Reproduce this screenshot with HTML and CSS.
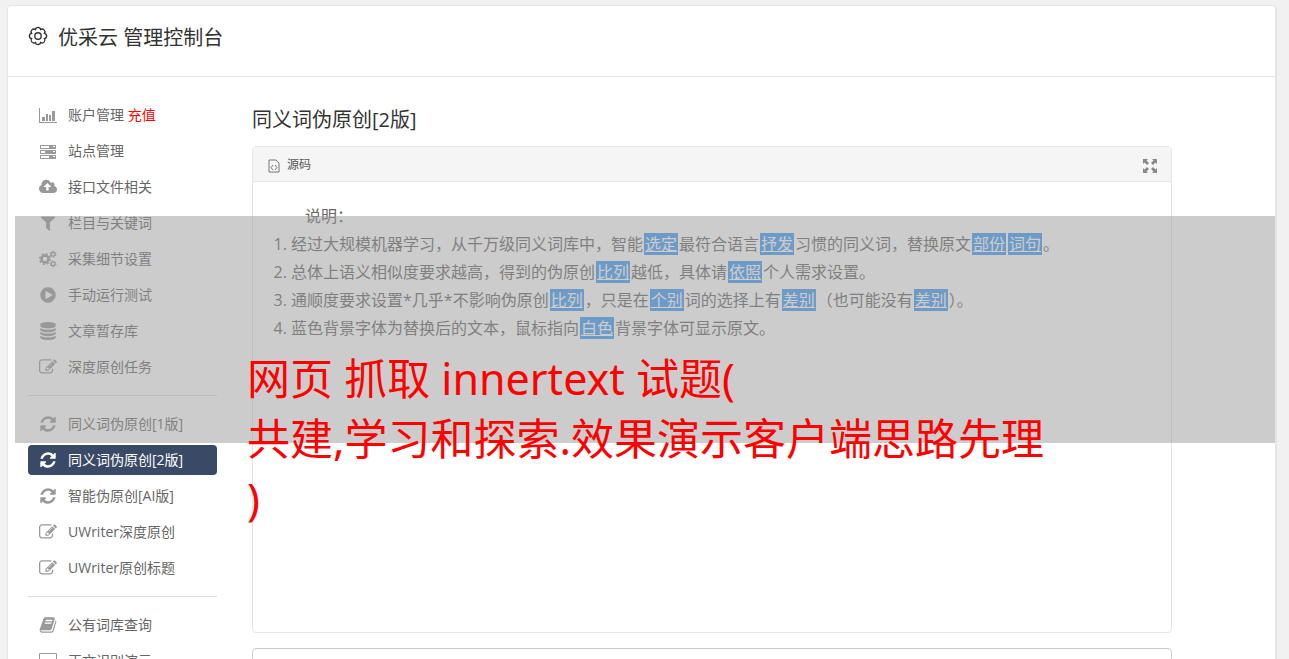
FILE: index.html
```html
<!DOCTYPE html>
<html lang="zh-CN">
<head>
    <meta charset="UTF-8">
    <meta name="viewport" content="width=device-width, initial-scale=1.0">
    <title>优采云 管理控制台</title>
    <link rel="stylesheet" href="styles.css">
</head>
<body>
    <!-- 公用图标 -->
    <svg class="symbols" aria-hidden="true">
        <symbol id="edit" viewBox="0 0 1792 1792"><path d="M888 1184l116-116-152-152-116 116v56h96v96h56zm440-720q-16-16-33 1l-350 350q-17 17-1 33t33-1l350-350q17-17 1-33zm80 594v190q0 119-84.5 203.5t-203.5 84.5h-832q-119 0-203.5-84.5t-84.5-203.5v-832q0-119 84.5-203.5t203.5-84.5h832q63 0 117 25 15 7 18 23 3 17-9 29l-49 49q-14 14-32 8-23-6-45-6h-832q-66 0-113 47t-47 113v832q0 66 47 113t113 47h832q66 0 113-47t47-113v-126q0-13 9-22l64-64q15-15 35-7t20 29zm-96-738l288 288-672 672h-288v-288zm444 132l-92 92-288-288 92-92q28-28 68-28t68 28l152 152q28 28 28 68t-28 68z"/></symbol>
        <symbol id="refresh" viewBox="0 0 1792 1792"><path d="M1639 1056q0 5-1 7-64 268-268 434.5t-478 166.5q-146 0-282.5-55t-243.5-157l-129 129q-19 19-45 19t-45-19-19-45v-448q0-26 19-45t45-19h448q26 0 45 19t19 45-19 45l-137 137q71 66 161 102t187 36q134 0 250-65t186-179q11-17 53-117 8-23 30-23h192q13 0 22.5 9.5t9.5 22.5zm25-800v448q0 26-19 45t-45 19h-448q-26 0-45-19t-19-45 19-45l138-138q-148-137-349-137-134 0-250 65t-186 179q-11 17-53 117-8 23-30 23h-199q-13 0-22.5-9.5t-9.5-22.5v-7q65-268 270-434.5t480-166.5q146 0 284 55.5t245 156.5l130-129q19-19 45-19t45 19 19 45z"/></symbol>
    </svg>

    <div class="card">
        <header class="card-header">
            <svg class="gear" viewBox="0 0 18 18"><path d="M14.8 6.6A2.45 2.45 0 0 1 14.8 11.4A2.45 2.45 0 0 1 11.4 14.8A2.45 2.45 0 0 1 6.6 14.8A2.45 2.45 0 0 1 3.2 11.4A2.45 2.45 0 0 1 3.2 6.6A2.45 2.45 0 0 1 6.6 3.2A2.45 2.45 0 0 1 11.4 3.2A2.45 2.45 0 0 1 14.8 6.6z"/><circle cx="9" cy="9" r="2.9"/></svg>
            <h1>优采云 管理控制台</h1>
        </header>

        <div class="card-body">
            <nav class="sidebar">
                <a href="#"><svg viewBox="0 0 18 18"><path d="M0 2h1v14h17v1H0zM3 11h3v4H3zM7 8h2v7H7zM10 9h2v6h-2zM13 5h3v10h-3z"/></svg>账户管理 <span class="recharge">充值</span></a>
                <a href="#"><svg viewBox="0 0 18 18"><path fill-rule="evenodd" d="M1 3h16v4H1zM2 4v2h8V4zM14 4v1h2V4zM1 8h16v4H1zM2 9v2h4V9zM14 9v1h2V9zM1 13h16v4H1zM2 14v2h8v-2zM14 14v1h2v-1z"/></svg>站点管理</a>
                <a href="#"><svg viewBox="-64 0 1920 1792"><path d="M1216 864q0-14-9-23l-352-352q-9-9-23-9t-23 9l-351 351q-10 12-10 24 0 14 9 23t23 9h224v352q0 13 9.5 22.5t22.5 9.5h192q13 0 22.5-9.5t9.5-22.5v-352h224q13 0 22.5-9.5t9.5-22.5zm640 288q0 159-112.5 271.5t-271.5 112.5h-1088q-185 0-316.5-131.5t-131.5-316.5q0-130 70-240t188-165q-2-30-2-43 0-212 150-362t362-150q156 0 285.5 87t188.5 231q71-62 166-62 106 0 181 75t75 181q0 76-41 138 130 31 213.5 135.5t83.5 238.5z"/></svg>接口文件相关</a>
                <a href="#"><svg viewBox="0 0 1792 1792"><path d="M1595 295q17 41-14 70l-493 493v742q0 42-39 59-13 5-25 5-27 0-45-19l-256-256q-19-19-19-45v-486l-493-493q-31-29-14-70 17-39 59-39h1280q42 0 59 39z"/></svg>栏目与关键词</a>
                <a href="#"><svg class="cogs" viewBox="0 0 18 18"><circle cx="6" cy="9" r="3.5" stroke-width="2.4"/><circle cx="6" cy="9" r="5.2" stroke-width="1.6" stroke-dasharray="2.04 2.04"/><circle cx="14" cy="4.2" r="1.9" stroke-width="1.4"/><circle cx="14" cy="4.2" r="3" stroke-width="1" stroke-dasharray="1.57 1.57"/><circle cx="14" cy="13.8" r="1.9" stroke-width="1.4"/><circle cx="14" cy="13.8" r="3" stroke-width="1" stroke-dasharray="1.57 1.57"/></svg>采集细节设置</a>
                <a href="#"><svg viewBox="0 0 1792 1792"><path d="M896 128q209 0 385.5 103t279.5 279.5 103 385.5-103 385.5-279.5 279.5-385.5 103-385.5-103-279.5-279.5-103-385.5 103-385.5 279.5-279.5 385.5-103zm384 823q32-18 32-55t-32-55l-544-320q-31-19-64-1-32 19-32 56v640q0 37 32 56 16 8 32 8 17 0 32-9z"/></svg>手动运行测试</a>
                <a href="#"><svg viewBox="0 0 1792 1792"><path d="M896 768q237 0 443-43t325-127v170q0 69-103 128t-280 93.5-385 34.5-385-34.5-280-93.5-103-128v-170q119 84 325 127t443 43zm0 768q237 0 443-43t325-127v170q0 69-103 128t-280 93.5-385 34.5-385-34.5-280-93.5-103-128v-170q119 84 325 127t443 43zm0-384q237 0 443-43t325-127v170q0 69-103 128t-280 93.5-385 34.5-385-34.5-280-93.5-103-128v-170q119 84 325 127t443 43zm0-1152q208 0 385 34.5t280 93.5 103 128v128q0 69-103 128t-280 93.5-385 34.5-385-34.5-280-93.5-103-128v-128q0-69 103-128t280-93.5 385-34.5z"/></svg>文章暂存库</a>
                <a href="#"><svg><use href="#edit"/></svg>深度原创任务</a>
                <hr>
                <a href="#"><svg><use href="#refresh"/></svg>同义词伪原创[1版]</a>
                <a href="#" class="active"><svg><use href="#refresh"/></svg>同义词伪原创[2版]</a>
                <a href="#"><svg><use href="#refresh"/></svg>智能伪原创[AI版]</a>
                <a href="#"><svg><use href="#edit"/></svg>UWriter深度原创</a>
                <a href="#"><svg><use href="#edit"/></svg>UWriter原创标题</a>
                <hr>
                <a href="#"><svg viewBox="0 0 1792 1792"><path d="M1703 478q40 57 18 129l-275 906q-19 64-76.5 107.5t-122.5 43.5h-923q-77 0-148.5-53.5t-99.5-131.5q-24-67-2-127 0-4 3-27t4-37q1-8-3-21.5t-3-19.5q2-11 8-21t16.5-23.5 16.5-23.5q23-38 45-91.5t30-91.5q3-10 .5-30t-.5-28q3-11 17-28t17-23q21-36 42-92t25-90q1-9-2.5-32t.5-28q4-13 22-30.5t22-22.5q19-26 42.5-84.5t27.5-96.5q1-8-3-25.5t-2-26.5q2-8 9-18t18-23 17-21q8-12 16.5-30.5t15-35 16-36 19.5-32 26.5-23.5 36-11.5 47.5 5.5l-1 3q38-9 51-9h761q74 0 114 56t18 130l-274 906q-36 119-71.5 153.5t-128.5 34.5h-869q-27 0-38 15-11 16-1 43 24 70 144 70h923q29 0 56-15.5t35-41.5l300-987q7-22 5-57 38 15 59 43zm-1064 2q-4 13 2 22.5t20 9.5h608q13 0 25.5-9.5t16.5-22.5l21-64q4-13-2-22.5t-20-9.5h-608q-13 0-25.5 9.5t-16.5 22.5zm-83 256q-4 13 2 22.5t20 9.5h608q13 0 25.5-9.5t16.5-22.5l21-64q4-13-2-22.5t-20-9.5h-608q-13 0-25.5 9.5t-16.5 22.5z"/></svg>公有词库查询</a>
                <a href="#"><svg viewBox="0 0 18 18"><path fill-rule="evenodd" d="M1 1h16q1 0 1 1v11q0 1-1 1h-6v2h2v1H5v-1h2v-2H1q-1 0-1-1V2q0-1 1-1zM1 2v9h16V2z"/></svg>正文识别演示</a>
            </nav>

            <main class="content">
                <h2>同义词伪原创[2版]</h2>
                <div class="editor">
                    <div class="toolbar">
                        <button type="button"><svg class="source" viewBox="0 0 12 14"><path d="M1 1h7l3 3v9H1z"/><path d="M5 6L3 8.500L5 11M7 6L9 8.500L7 11"/></svg>源码</button>
                        <button type="button" aria-label="全屏"><svg class="expand" viewBox="0 0 14 14"><path d="M0 0h5L3.500 1.500 6 4 4 6 1.500 3.500 0 5zM14 0v5l-1.500-1.500L10 6 8 4l2.500-2.500L9 0zM0 14V9l1.500 1.500L4 8l2 2-2.500 2.500L5 14zM14 14H9l1.500-1.500L8 10l2-2 2.500 2.500L14 9z"/></svg></button>
                    </div>
                    <div class="editor-text">
                        <p>说明：</p>
                        <ol>
                            <li>经过大规模机器学习，从千万级同义词库中，智能<mark>选定</mark>最符合语言<mark>抒发</mark>习惯的同义词，替换原文<mark>部份</mark><mark>词句</mark>。</li>
                            <li>总体上语义相似度要求越高，得到的伪原创<mark>比列</mark>越低，具体请<mark>依照</mark>个人需求设置。</li>
                            <li>通顺度要求设置*几乎*不影响伪原创<mark>比列</mark>，只是在<mark>个别</mark>词的选择上有<mark>差别</mark>（也可能没有<mark>差别</mark>）。</li>
                            <li>蓝色背景字体为替换后的文本，鼠标指向<mark>白色</mark>背景字体可显示原文。</li>
                        </ol>
                    </div>
                </div>
                <textarea class="result" aria-label="结果"></textarea>
            </main>
        </div>
    </div>

    <!-- 灰色蒙层与标题 -->
    <div class="banner">
        <div class="banner-title">网页 抓取 innertext 试题(<br>共建,学习和探索.效果演示客户端思路先理<br>)</div>
    </div>
</body>
</html>
```
FILE: styles.css
```css
* {
    box-sizing: border-box;
}

html {
    scrollbar-width: none;
}

body {
    margin: 0;
    padding: 5px 12px 0 7px;
    position: relative;
    background: #f1f1f1;
    color: #666;
    font-family: "Open Sans", "Noto Sans CJK SC", sans-serif;
    font-size: 14px;
}

.symbols {
    display: none;
}

h1, h2 {
    margin: 0;
    color: #333;
    font-size: 20px;
    font-weight: 400;
    line-height: 32px;
}

.card {
    background: #fff;
    border: 1px solid #e5e5e5;
    border-right-width: 2px;
    border-radius: 4px;
}

.card-header {
    display: flex;
    gap: 10px;
    height: 71px;
    padding: 16px 20px;
    border-bottom: 1px solid #e5e5e5;
}

.gear {
    width: 20px;
    height: 20px;
    margin-top: 4px;
    fill: none;
    stroke: #333;
    stroke-width: 1.2;
}

.card-body {
    display: flex;
    gap: 35px;
    padding: 23px 103px 20px 20px;
}

/* 左侧菜单 */
.sidebar {
    flex: 0 0 189px;
}

.sidebar a {
    display: flex;
    align-items: center;
    height: 30px;
    margin-bottom: 6px;
    padding: 0 0 2px 11px;
    border-radius: 4px;
    color: #666;
    text-decoration: none;
    white-space: pre;
}

.sidebar svg {
    width: 18px;
    height: 18px;
    margin: 2px 11px 0 0;
    fill: #999;
}

.sidebar .cogs {
    fill: none;
    stroke: #999;
}

.sidebar .active {
    background: #3a4a66;
    color: #fff;
}

.sidebar .active svg {
    fill: #fff;
}

.sidebar .recharge {
    color: #f00;
}

.sidebar hr {
    height: 1px;
    margin: 13px 0;
    border: 0;
    background: #ddd;
}

.sidebar a:has(+ hr) {
    margin-bottom: 0;
}

/* 编辑器 */
.content {
    flex: 1;
    min-width: 0;
    padding-top: 4px;
}

.editor {
    min-height: 487px;
    margin: 10px 0 15px;
    border: 1px solid #e5e5e5;
    border-radius: 4px;
}

.toolbar {
    display: flex;
    justify-content: space-between;
    height: 35px;
    padding: 0 14px 0 15px;
    background: #f5f5f5;
    border-bottom: 1px solid #e5e5e5;
}

.toolbar button {
    display: flex;
    align-items: center;
    padding: 0;
    border: 0;
    background: none;
    color: #555;
    font: 12px "Open Sans", "Noto Sans CJK SC", sans-serif;
}

.source {
    width: 12px;
    height: 14px;
    margin: 3px 7px 0 0;
    fill: none;
    stroke: #777;
}

.expand {
    width: 14px;
    height: 14px;
    margin-top: 4px;
    fill: #888;
}

.editor-text {
    padding: 20px;
    font-size: 16px;
    line-height: 28px;
}

.editor-text p {
    margin: 0;
    text-indent: 2em;
}

.editor-text ol {
    margin: 0;
    padding-left: 18px;
}

mark {
    margin: 0 1px;
    padding: 0 1px;
    background: #409bf5;
    color: #fff;
    text-decoration: underline;
}

.result {
    display: block;
    width: 100%;
    height: 120px;
    border: 1px solid #ccc;
    border-radius: 4px;
    resize: none;
}

.banner {
    position: absolute;
    top: 216px;
    left: 15px;
    right: 14px;
    height: 227px;
    padding: 133px 0 0 232px;
    background: rgba(153, 153, 153, 0.5);
}

.banner-title {
    color: #f00;
    font-family: "Noto Sans", "Noto Sans CJK SC", sans-serif;
    font-size: 43px;
    line-height: 60px;
    white-space: nowrap;
}
```
